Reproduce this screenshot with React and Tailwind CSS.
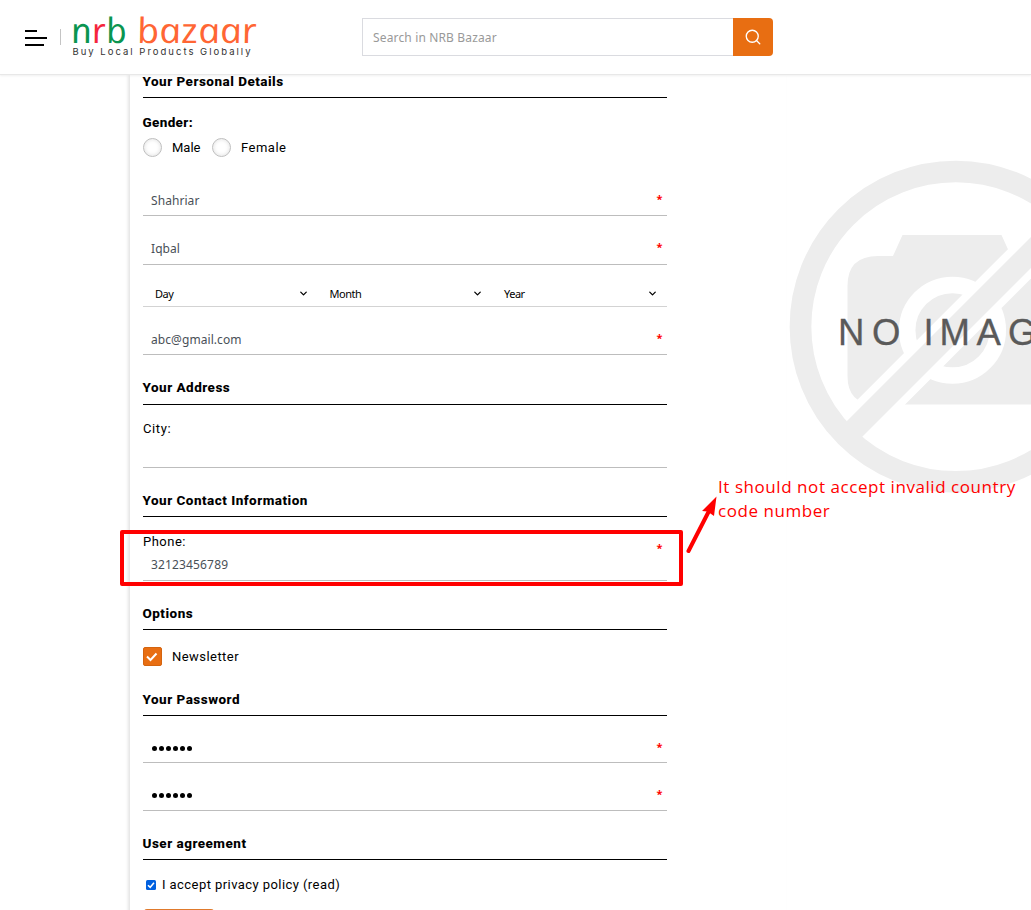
import { ChevronDown, Search } from "lucide-react";

const ui = "font-['Noto_Sans','Open_Sans',sans-serif]";

function SectionTitle({ children, className }) {
  return (
    <h2 className={`flex items-end border-b border-black text-[13.5px] leading-4 font-extrabold tracking-[0.48px] text-black ${className}`}>
      <span className="-ml-[0.5px] whitespace-nowrap">{children}</span>
    </h2>
  );
}

function Required({ className = "" }) {
  return <span className={`w-[15px] text-center text-[11px] leading-4 font-bold tracking-normal text-[#ff0000] ${ui} ${className}`}>*</span>;
}

function Field({ value, className, required = true }) {
  return (
    <div className={`flex items-end justify-between border-b border-[#bdbdbd] pl-2 text-[12px] leading-4 tracking-[0.07px] text-[#495057] ${ui} ${className}`}>
      <span>{value}</span>
      {required && <Required className="mb-[2px]" />}
    </div>
  );
}

function PasswordField({ className }) {
  return (
    <div className={`flex items-end justify-between border-b border-[#bdbdbd] pl-2 ${className}`}>
      <span className="flex h-4 items-center gap-[2px] pl-px">
        {[0, 1, 2, 3, 4, 5].map((n) => (
          <i key={n} className="size-[5px] rounded-full bg-black" />
        ))}
      </span>
      <Required className="mb-px" />
    </div>
  );
}

function Select({ label }) {
  return (
    <div className={`flex h-full w-[174.5px] items-end justify-between border-b border-[#d3d3d3] pr-[9px] pb-[4px] pl-3 text-[11px] leading-4 tracking-[-0.5px] text-black ${ui}`}>
      <span>{label}</span>
      <ChevronDown className="mb-[3px] size-[11px]" strokeWidth={2.8} />
    </div>
  );
}

function Logo() {
  return (
    <svg className="h-[62px] w-[200px]" viewBox="66 0 200 62">
      <g fontFamily="'Open Sans', 'Noto Sans', sans-serif" fontStyle="italic" fontWeight="400" fontSize="35">
        <text transform="translate(73 42.700) skewX(12)" fill="#0a9550" textLength="56" lengthAdjust="spacingAndGlyphs">
          n<tspan fill="#f5253c">r</tspan>b
        </text>
        <text transform="translate(139 42.700) skewX(12)" fill="#ff6634" textLength="120" lengthAdjust="spacingAndGlyphs">bazaar</text>
      </g>
      <text x="72.500" y="55" fontFamily="Inter, sans-serif" fontSize="9.500" fill="#333" textLength="178">Buy Local Products Globally</text>
    </svg>
  );
}

function NoImage() {
  return (
    <svg className="h-[340px] w-[245px]" viewBox="786 156 245 340">
      <path
        fill="#ededed"
        d="M902.5 235H1001.5L1011 256H1031V404.500H876Q847.500 404.500 847.500 376V286Q847.500 256 878 256H893Z"
      />
      <circle cx="952.500" cy="330.200" r="45.300" fill="#ededed" stroke="#fff" strokeWidth="16.500" />
      <path d="M830 453.300L1041 242.300" stroke="#fff" strokeWidth="37" />
      <circle cx="955.700" cy="326.700" r="155.200" fill="none" stroke="#ededed" strokeWidth="21.700" />
      <path d="M845 438.500L1041 242.500" stroke="#ededed" strokeWidth="22" />
      <text x="838 872 900 923.5 939.5 976.5 1008" y="344.500" fontFamily="'Liberation Sans', Arial, sans-serif" fontSize="36.500" fill="#5a5a5a" stroke="#5a5a5a" strokeWidth=".3">NO IMAG</text>
    </svg>
  );
}

export default function App() {
  return (
    <div className="relative flex h-[910px] w-[1031px] flex-col overflow-hidden bg-white font-[Roboto,sans-serif] text-[13px] leading-4 tracking-[0.35px] text-black">
      <header className="z-10 flex h-[75px] shrink-0 items-start border-b border-[#e8e8e8] bg-white tracking-normal shadow-[0_1px_2px_#00000010]">
        <div className="mt-[30px] ml-[25px] flex h-4 w-[22px] flex-col justify-between">
          <i className="h-[2px] w-3 bg-black" />
          <i className="h-[2px] w-[22px] bg-black" />
          <i className="h-[2px] w-[19px] bg-black" />
        </div>
        <div className="mt-[29px] ml-[13px] h-4 w-px bg-[#c4c4c4]" />
        <div className="ml-[5px]"><Logo /></div>
        <div className="mt-[18px] ml-[96px] flex h-[38px] w-[411px]">
          <div className={`flex flex-1 items-center border border-r-0 border-[#dadbe0] pt-px pl-[10px] text-[12px] tracking-[0.15px] text-[#999] ${ui}`}>Search in NRB Bazaar</div>
          <div className="flex w-10 items-center justify-center rounded-r-[4px] bg-[#e86e12] text-white">
            <Search className="size-[18px]" strokeWidth={1.8} />
          </div>
        </div>
      </header>

      <main className="flex flex-1">
        <div className="ml-[130px] w-[656px] shrink-0 pl-[13px] shadow-[-2px_0_3px_#0000001c]">
          <form className="flex w-[524px] flex-col">
            <SectionTitle className="h-[23px] pb-[8px]">Your Personal Details</SectionTitle>
            <div className="mt-[16px] -ml-[0.5px] h-4 text-[13.5px] font-extrabold">Gender:</div>
            <div className="mt-[8px] flex h-[19px] items-center">
              <span className="size-[19px] rounded-full border border-[#bebebe] shadow-[inset_0_0_4px_#0002]" />
              <span className="ml-[10px] w-[40px] tracking-normal">Male</span>
              <span className="size-[19px] rounded-full border border-[#bebebe] shadow-[inset_0_0_4px_#0002]" />
              <span className="ml-[10px] tracking-[0.5px]">Female</span>
            </div>
            <Field value="Shahriar" className="h-[59px] pb-[6px]" />
            <Field value="Iqbal" className="h-[49px] pb-[7px]" />
            <div className="flex h-[42px]">
              <Select label="Day" />
              <Select label="Month" />
              <Select label="Year" />
            </div>
            <Field value="abc@gmail.com" className="h-[48px] pb-[6px]" />
            <SectionTitle className="h-[50px] pb-[9px]">Your Address</SectionTitle>
            <div className="h-[63px] border-b border-[#bdbdbd] pt-[16px] tracking-[0.6px]">City:</div>
            <SectionTitle className="h-[49px] pb-[8px]">Your Contact Information</SectionTitle>
            <div className="flex h-[64px] items-start justify-between border-b border-[#bdbdbd] pt-[17px]">
              <div>
                <div className="tracking-[0.5px]">Phone:</div>
                <div className={`mt-[7px] pl-2 text-[12px] tracking-[0.15px] text-[#495057] ${ui}`}>32123456789</div>
              </div>
              <Required className="mt-[6px]" />
            </div>
            <SectionTitle className="h-[49px] pb-[8px]">Options</SectionTitle>
            <div className="mt-[17px] flex h-[19px] items-center">
              <svg className="size-[19px]" viewBox="0 0 19 19">
                <rect x=".5" y=".5" width="18" height="18" rx="1.500" fill="#e86e12" stroke="#d4640f" />
                <path d="M4 9.500L7.500 13L13.500 6.500" fill="none" stroke="#fff" strokeWidth="2" />
              </svg>
              <span className="ml-[10px] tracking-[0.45px]">Newsletter</span>
            </div>
            <SectionTitle className="h-[50px] pb-[8px]">Your Password</SectionTitle>
            <PasswordField className="h-[47px] pb-[6px]" />
            <PasswordField className="h-[48px] pb-[7px]" />
            <SectionTitle className="h-[49px] pb-[8px]">User agreement</SectionTitle>
            <div className="mt-[17px] flex h-4 items-center pl-[3px]">
              <svg className="size-[10px]" viewBox="0 0 10 10">
                <rect width="10" height="10" rx="1.500" fill="#0060df" />
                <path d="M2 5.200L4.200 7.300L8 2.700" fill="none" stroke="#fff" strokeWidth="1.500" />
              </svg>
              <span className="ml-[6px] tracking-[0.43px]">I accept privacy policy (read)</span>
            </div>
            <div className="mt-[16px] ml-px h-[38px] w-[70px] rounded-[3px] bg-[#e07a2c]" />
          </form>
        </div>
        <div className="mt-[81px] w-[245px] shrink-0"><NoImage /></div>
      </main>

      <div className="absolute top-[530px] left-[120px] z-20 h-[56px] w-[563px] rounded-[2px] border-4 border-[#ff0000]" />
      <svg className="absolute top-[494px] left-[684px] z-20 h-[62px] w-[36px]" viewBox="684 494 36 62">
        <path d="M688.500 551L710 509" stroke="#f00" strokeWidth="4" strokeLinecap="round" />
        <path d="M716.500 496.500L702 511L707.500 511.500L714 516Z" fill="#f00" />
      </svg>
      <p className="absolute top-[475px] left-[718px] z-20 text-[17px] leading-6 font-normal tracking-[0.56px] whitespace-nowrap text-[#ff0000] font-['Open_Sans',sans-serif]">
        It should not accept invalid country<br />code number
      </p>
    </div>
  );
}
